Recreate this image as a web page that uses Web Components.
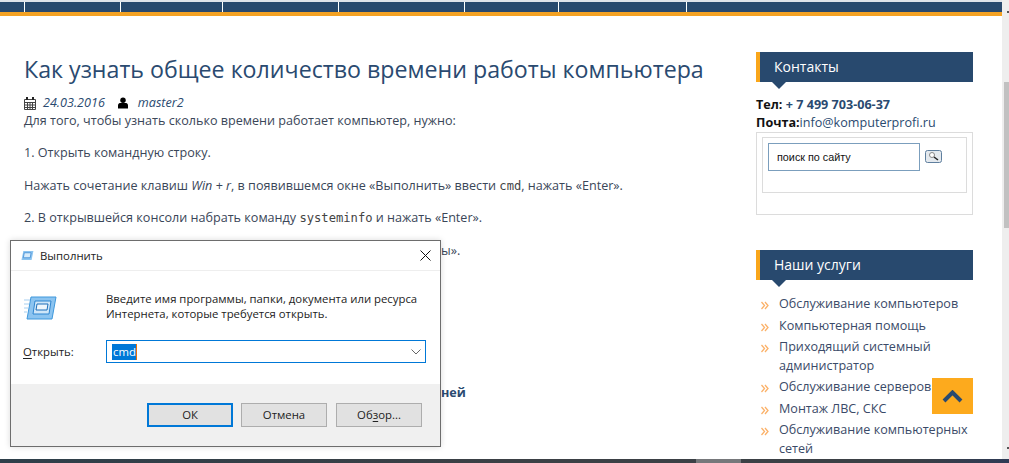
<!DOCTYPE html>
<html lang="ru">
<head>
<meta charset="utf-8">
<title>Как узнать общее количество времени работы компьютера</title>
<style>
  html, body { margin: 0; height: 463px; overflow: hidden; background: #fff; }
  body { font-family: "Open Sans", sans-serif; position: relative; }
</style>
</head>
<body>
<site-page>
  <site-article></site-article>
  <site-sidebar slot="side"></site-sidebar>
</site-page>
<run-dialog></run-dialog>
<to-top></to-top>

<script>
class SitePage extends HTMLElement {
  constructor() {
    super();
    this.attachShadow({ mode: "open" });
    this.shadowRoot.innerHTML = `
      <style>
        :host { display: flex; flex-direction: column; height: 463px; box-sizing: border-box; overflow: hidden; }
        .mid { flex: 1; display: flex; min-height: 0; }
        .page { flex: 1; display: flex; flex-direction: column; min-width: 0; overflow: hidden; }
        .nav { height: 10px; background: #28496e; border-top: 2px solid #dfe3ea; border-bottom: 4px solid #f4a223; display: flex; flex: none; }
        .nav i { border-left: 1px solid #fff; }
        .cols { flex: 1; display: flex; min-height: 0; padding: 36px 29px 0 24px; }
        .main { width: 732px; flex: none; }
        .side { width: 217px; flex: none; }
        .track { width: 7px; flex: none; background: #eeeeee; display: flex; flex-direction: column; }
        .track i { display: block; flex: none; width: 2px; height: 2px; margin: 11px 0 0 5px; background: #555; }
        .track i:last-child { margin: auto 0 10px 5px; }
        .track b { display: block; flex: none; margin: 69px 0 0 2px; height: 146px; background: #c1c1c1; }
        .h { height: 4px; flex: none; background: linear-gradient(90deg, #2e3f4a, #3b4045 50%, #3b4045 90%, #2e3a55); display: flex; }
        .h b { display: block; margin-left: 696px; width: 45px; background: #76787b; }
      </style>
      <div class="mid">
        <div class="page">
          <div class="nav">
            <i style="margin-left:24px;width:95px"></i><i style="width:101px"></i><i style="width:115px"></i><i style="width:125px"></i><i style="width:93px"></i><i style="width:127px"></i><i></i>
          </div>
          <div class="cols">
            <div class="main"><slot></slot></div>
            <div class="side"><slot name="side"></slot></div>
          </div>
        </div>
        <div class="track"><i></i><b></b><i></i></div>
      </div>
      <div class="h"><b></b></div>`;
  }
}

class SiteArticle extends HTMLElement {
  constructor() {
    super();
    this.attachShadow({ mode: "open" });
    this.shadowRoot.innerHTML = `
      <style>
        :host { display: block; color: #3a4658; font-size: 12.6px; line-height: 18px; }
        h1 { margin: -1px 0 7px; font-weight: 400; font-size: 23.2px; line-height: 36px; color: #2a4a70; white-space: nowrap; }
        .meta { display: flex; align-items: center; height: 18px; font-style: italic; color: #2a4a70; }
        .meta svg { flex: none; }
        .meta span { margin: 0 7px 0 7px; }
        p { margin: 0 0 14.4px; white-space: nowrap; }
        code { font-family: "DejaVu Sans Mono", monospace; font-size: 12.15px; color: #444; }
        .hid { margin-top: 124.5px; font-weight: 700; color: #2a4a70; padding-left: 417px; }
      </style>
      <h1>Как узнать общее количество времени работы компьютера</h1>
      <div class="meta">
        <svg width="12" height="13" viewBox="0 0 12 13"><path fill="none" stroke="#444" d="M.5 2.500h11v10H.5zM.5 5.500h11M3.500 5.500v7M6 5.500v7M8.500 5.500v7M.5 8h11M.5 10.500h11"/><path stroke="#222" stroke-width="2" d="M3 0v3M9 0v3"/></svg>
        <span>24.03.2016</span>
        <svg width="10" height="12" viewBox="0 0 11 12" style="margin-left:6px"><circle cx="5.500" cy="3" r="3"/><path d="M0 12V8.500C0 6.500 1.500 6 3 6h5c1.500 0 3 .5 3 2.500V12z"/></svg>
        <span style="margin-left:10px">master2</span>
      </div>
      <p>Для того, чтобы узнать сколько времени работает компьютер, нужно:</p>
      <p>1. Открыть командную строку.</p>
      <p>Нажать сочетание клавиш <em>Win + r</em>, в появившемся окне «Выполнить» ввести <code>cmd</code>, нажать «Enter».</p>
      <p>2. В открывшейся консоли набрать команду <code>systeminfo</code> и нажать «Enter».</p>
      <p style="padding-left:417px">ы».</p>
      <p class="hid">ней</p>`;
  }
}

class SideBox extends HTMLElement {
  constructor() {
    super();
    this.attachShadow({ mode: "open" });
    this.shadowRoot.innerHTML = `
      <style>
        :host { display: block; }
        .t { position: relative; height: 30px; background: #28496e; border-left: 4px solid #f9a61a; color: #fff; font-size: 14px; line-height: 29px; padding-left: 14px; }
        .t::after { content: ""; position: absolute; left: 12px; top: 30px; border: 7px solid transparent; border-top-color: #28496e; border-bottom: 0; }
        .b { padding-top: 14px; }
      </style>
      <div class="t"><slot name="title"></slot></div>
      <div class="b"><slot></slot></div>`;
  }
}

class SiteSidebar extends HTMLElement {
  constructor() {
    super();
    this.attachShadow({ mode: "open" });
    const items = [
      "Обслуживание компьютеров",
      "Компьютерная помощь",
      "Приходящий системный администратор",
      "Обслуживание серверов",
      "Монтаж ЛВС, СКС",
      "Обслуживание компьютерных сетей"
    ];
    this.shadowRoot.innerHTML = `
      <style>
        :host { display: block; font-size: 12.6px; color: #2a4a70; }
        .c { line-height: 18px; }
        .c .p { font-weight: 700; color: #2a4a70; }
        .c .k { color: #111; font-weight: 700; }
        .outer { box-sizing: border-box; border: 1px solid #dcdcdc; height: 83px; padding: 4px 5px; margin-bottom: 35px; }
        .inner { box-sizing: border-box; border: 1px solid #dcdcdc; height: 56px; padding: 5px; display: flex; align-items: flex-start; gap: 5px; }
        .q { box-sizing: border-box; width: 152px; height: 28px; flex: none; border: 1px solid #7b9ebd; font: 10.8px/26px "Liberation Sans", sans-serif; color: #111; padding-left: 8px; }
        .go { width: 17px; height: 13px; margin-top: 7px; flex: none; }
        ul { list-style: none; margin: 1px 0 0; padding: 0; }
        li { display: flex; line-height: 18.5px; margin-bottom: 3px; color: #3a4a68; }
        li span { display: block; width: 194px; }
        li svg { flex: none; width: 8px; height: 9px; margin: 6px 10px 0 5px; }
      </style>
      <side-box>
        <span slot="title">Контакты</span>
        <div class="c"><span class="k">Тел:</span> <span class="p">+ 7 499 703-06-37</span><br><span class="k">Почта:</span>info@komputerprofi.ru</div>
        <div class="outer"><div class="inner">
          <div class="q">поиск по сайту</div>
          <svg class="go" viewBox="0 0 17 13">
            <rect x=".5" y=".5" width="16" height="12" rx="2" fill="#e4e9ee" stroke="#5f7f9e"/>
            <circle cx="7" cy="5" r="2.500" fill="#fff" stroke="#888"/>
            <path d="M9 7l4 3" stroke="#222" stroke-width="1.500"/>
          </svg>
        </div></div>
      </side-box>
      <side-box>
        <span slot="title">Наши услуги</span>
        <ul>${items.map(t => `<li><svg viewBox="0 0 8 9"><path d="M.5 1l3 3.500-3 3.500M4 1l3 3.500-3 3.500" fill="none" stroke="#fbb168" stroke-width="1.300"/></svg><span>${t}</span></li>`).join("")}</ul>
      </side-box>`;
  }
}

class RunDialog extends HTMLElement {
  constructor() {
    super();
    this.attachShadow({ mode: "open" });
    this.shadowRoot.innerHTML = `
      <style>
        :host { position: absolute; left: 10px; top: 240px; width: 431px; height: 207px; box-sizing: border-box; border: 1px solid #6d6d6d; background: #fff; display: flex; flex-direction: column; font: 11.35px "Open Sans", sans-serif; color: #222; box-shadow: 0 0 6px rgba(0,0,0,.15); }
        u { text-underline-offset: 2px; }
        .bar { height: 30px; flex: none; box-sizing: border-box; border-bottom: 1px solid #eee; display: flex; align-items: center; padding: 0 9px; gap: 6px; }
        .bar svg.x { margin-left: auto; }
        .body { flex: 1; }
        .row { display: flex; padding: 20px 0 0 13px; }
        .row svg { margin-right: 49px; margin-top: 5px; flex: none; }
        .row div { line-height: 15px; }
        .open { display: flex; align-items: center; padding: 19px 14px 0 12px; }
        .open label { width: 83px; }
        .in { flex: 1; box-sizing: border-box; height: 23px; border: 1px solid #0078d7; display: flex; align-items: center; padding: 0 4px 0 5px; justify-content: space-between; }
        .sel { background: #0078d7; color: #fff; height: 16px; line-height: 15px; padding: 0 0 0 1px; border-right: 1px solid #e8700a; }
        .foot { height: 62px; flex: none; background: #f0f0f0; display: flex; justify-content: flex-end; gap: 9px; padding: 19px 18px 0 0; box-sizing: border-box; }
        .btn { box-sizing: border-box; width: 86px; height: 24px; border: 1px solid #adadad; background: #e1e1e1; text-align: center; line-height: 22px; }
        .btn.def { border: 2px solid #0078d7; line-height: 20px; margin-right: -1px; }
      </style>
      <div class="bar">
        <svg width="14" height="11" viewBox="0 0 30 24"><path d="M7 2h22l-4 20H3z" fill="#8cc4f0"/><path d="M9 6h15l-2 11H7z" fill="#d8ecfb" stroke="#4c94d8" stroke-width="2"/></svg>
        <span>Выполнить</span>
        <svg class="x" width="11" height="11" viewBox="0 0 11 11"><path d="M.5.500l10 10M10.500.500l-10 10" stroke="#111" fill="none"/></svg>
      </div>
      <div class="body">
        <div class="row">
          <svg width="33" height="24" viewBox="0 0 33 24">
            <path d="M0 4h6M0 8h5M0 12h4M0 16h3" stroke="#a6cff0"/>
            <path d="M7 1h25l-4 22H3z" fill="#8cc4f0" stroke="#3f98dc"/>
            <path d="M11 5h16l-2 13H9z" fill="#cfe6f8" stroke="#2f86d0"/>
            <path d="M13 8h11l-1 6H12z" fill="#eef6fc" stroke="#1c6fba"/>
          </svg>
          <div>Введите имя программы, папки, документа или ресурса<br>Интернета, которые требуется открыть.</div>
        </div>
        <div class="open">
          <label><u>О</u>ткрыть:</label>
          <div class="in">
            <span class="sel">cmd</span>
            <svg width="10" height="6" viewBox="0 0 10 6"><path d="M.5.500L5 5 9.500.500" fill="none" stroke="#666"/></svg>
          </div>
        </div>
      </div>
      <div class="foot">
        <div class="btn def">ОК</div>
        <div class="btn">Отмена</div>
        <div class="btn">Об<u>з</u>ор...</div>
      </div>`;
  }
}

class ToTop extends HTMLElement {
  constructor() {
    super();
    this.attachShadow({ mode: "open" });
    this.shadowRoot.innerHTML = `
      <style>
        :host { position: absolute; left: 932px; top: 378px; width: 41px; height: 36px; background: #fdaa1d; display: flex; align-items: center; justify-content: center; }
      </style>
      <svg width="21" height="13" viewBox="0 0 21 13"><path d="M2 11l8.500-8.500L19 11" fill="none" stroke="#2a4a70" stroke-width="4"/></svg>`;
  }
}

customElements.define("site-page", SitePage);
customElements.define("site-article", SiteArticle);
customElements.define("side-box", SideBox);
customElements.define("site-sidebar", SiteSidebar);
customElements.define("run-dialog", RunDialog);
customElements.define("to-top", ToTop);
</script>
</body>
</html>
